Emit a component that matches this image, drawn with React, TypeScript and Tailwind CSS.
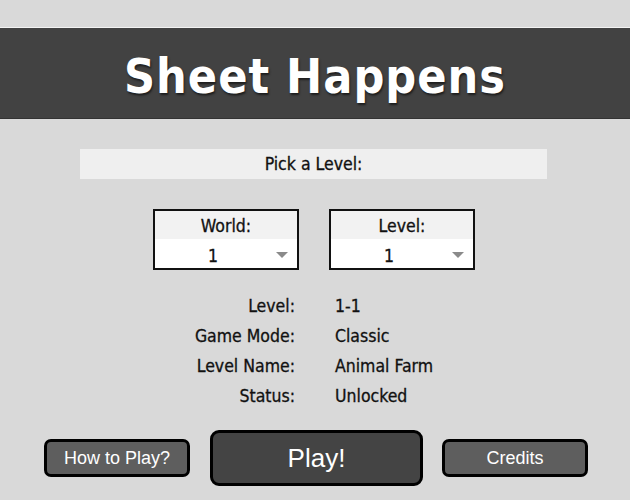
import { useState } from "react";

interface selectProps {
  label: string;
  value: string;
}

const LevelSelect = ({ label, value }: selectProps) => {
  return (
    <div className="w-[146px] h-[61px] border-2 border-[#111] bg-white flex flex-col">
      <div className="h-[28px] bg-[#f2f2f2] flex items-center justify-center pt-[2px]">
        {label}
      </div>
      <div className="relative flex-1 flex items-center justify-center">
        <span className="-ml-[26px] pt-[4px]">{value}</span>
        {/* dropdown caret */}
        <span className="absolute right-[9px] top-[13px] w-0 h-0 border-l-[6px] border-r-[6px] border-t-[6px] border-l-transparent border-r-transparent border-t-[#8a8a8a]" />
      </div>
    </div>
  );
};

const App = () => {
  const [world] = useState("1");
  const [level] = useState("1");

  const info = [
    ["Level:", "1-1"],
    ["Game Mode:", "Classic"],
    ["Level Name:", "Animal Farm"],
    ["Status:", "Unlocked"],
  ];

  return (
    <div className="w-[630px] h-[500px] bg-[#d9d9d9] pt-[27px] overflow-hidden text-[17.5px] text-[#111] [-webkit-text-stroke:0.3px_#111] font-['DejaVu_Sans_Condensed','Liberation_Sans',sans-serif]">
      {/* title banner */}
      <header className="h-[92px] border-t border-t-[#f3f3f3] border-b border-b-[#333] bg-[#424242] flex items-center justify-center [-webkit-text-stroke:0]">
        <h1 className="text-white font-bold text-[48px] tracking-[1px] [text-shadow:1px_2px_2px_#1e1e1e] pt-[5px]">
          Sheet Happens
        </h1>
      </header>

      <div className="mt-[30px] ml-[80px] w-[467px] h-[30px] bg-[#efefef] flex items-center justify-center">
        Pick a Level:
      </div>

      <div className="mt-[30px] flex justify-center gap-[30px] pr-[2px]">
        <LevelSelect label="World:" value={world} />
        <LevelSelect label="Level:" value={level} />
      </div>

      {/* level details */}
      <ul className="mt-[20px] ml-[145px]">
        {info.map(([k, v], index) => (
          <li key={index} className="h-[30px] flex items-center pt-[2px]">
            <span className="w-[150px] text-right">{k}</span>
            <span className="ml-[40px]">{v}</span>
          </li>
        ))}
      </ul>

      <div className="mt-[20px] flex items-center pl-[44px] gap-[20px] [-webkit-text-stroke:0] font-['Liberation_Sans',Arial,sans-serif]">
        <button className="w-[146px] h-[38px] border-[3px] border-black rounded-[7px] bg-[#5e5e5e] text-white text-[18px]">
          How to Play?
        </button>
        <button className="w-[213px] h-[56px] border-[3px] border-black rounded-[9px] bg-[#444] text-white text-[26px]">
          Play!
        </button>
        <button className="-ml-[1px] w-[146px] h-[38px] border-[3px] border-black rounded-[7px] bg-[#5e5e5e] text-white text-[18px]">
          Credits
        </button>
      </div>
    </div>
  );
};

export default App;
